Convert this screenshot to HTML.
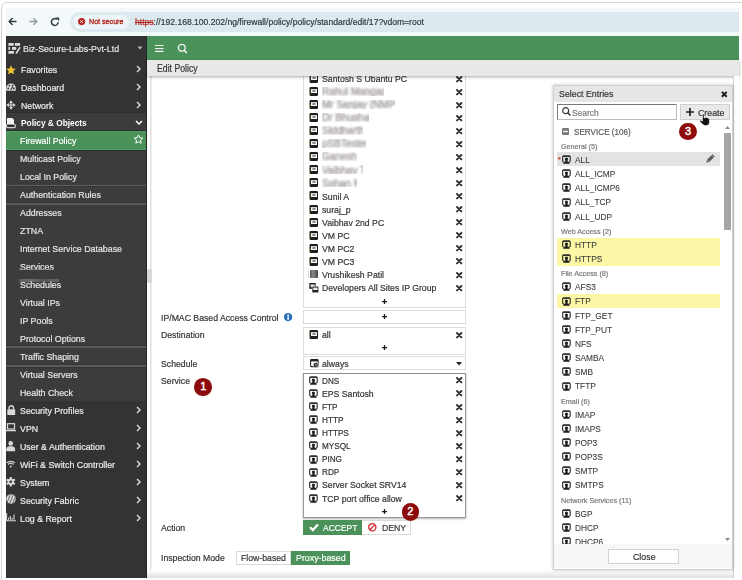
<!DOCTYPE html>
<html><head><meta charset="utf-8"><style>
html,body{margin:0;padding:0;width:742px;height:580px;overflow:hidden;background:#fff;}
body{position:relative;font-family:"Liberation Sans",sans-serif;}
.t{position:absolute;white-space:nowrap;line-height:1;transform-origin:0 0;-webkit-text-stroke:0.2px currentColor;}
.r{position:absolute;}
svg.r{overflow:visible;}
</style></head><body>
<div class="r" style="left:1px;top:2px;width:760px;height:600px;border:1.5px solid #d6d6d6;border-radius:6px;box-sizing:border-box;"></div>
<div class="r" style="left:6px;top:8px;width:733px;height:28px;background:#f3f8fa;"></div>
<div class="r" style="left:70px;top:12px;width:669px;height:19.5px;background:#dce9ee;border-radius:10px 0 0 10px;"></div>
<div class="r" style="left:73px;top:15px;width:56px;height:13.5px;background:#eef5f8;border-radius:7px;"></div>
<svg class="r" style="left:8px;top:17px;" width="9" height="9" viewBox="0 0 9 9"><path d="M8.5 4.5H1.2M4.6 1.1L1.2 4.5l3.4 3.4" fill="none" stroke="#2e3c42" stroke-width="1.4"/></svg>
<svg class="r" style="left:29px;top:17px;" width="9" height="9" viewBox="0 0 9 9"><path d="M0.5 4.5h7.3M4.4 1.1l3.4 3.4-3.4 3.4" fill="none" stroke="#8b989d" stroke-width="1.3"/></svg>
<svg class="r" style="left:50px;top:17px;" width="10" height="10" viewBox="0 0 10 10"><path d="M8.2 5.2A3.4 3.4 0 1 1 6.9 2.3" fill="none" stroke="#2e3c42" stroke-width="1.5"/><path d="M5.6 0.6h3.6v3.6z" fill="#2e3c42"/></svg>
<svg class="r" style="left:78px;top:18.1px;" width="7.2" height="7.2" viewBox="0 0 7.2 7.2"><circle cx="3.6" cy="3.6" r="3.6" fill="#b3261e"/><path d="M2.3 2.3l2.6 2.6M4.9 2.3L2.3 4.9" stroke="#fff" stroke-width="0.9"/></svg>
<div class="t" style="left:88.80px;top:18.00px;font-size:8px;transform:scaleX(0.89);color:#b3261e;font-weight:400;-webkit-text-stroke:0.35px #b3261e;">Not secure</div>
<div class="t" style="left:134.50px;top:18.00px;font-size:9px;transform:scaleX(0.952);color:#333a3d;font-weight:400;"><span style="color:#b3261e;text-decoration:line-through">https</span>://192.168.100.202/ng/firewall/policy/policy/standard/edit/17?vdom=root</div>
<div class="r" style="left:6px;top:36px;width:141px;height:542px;background:#333;"></div>
<div class="r" style="left:6px;top:112px;width:141px;height:18px;background:#3c3c3c;border-top:1px solid #2e2e2e;box-sizing:border-box;"></div>
<div class="r" style="left:6px;top:130px;width:141px;height:1px;background:#2e2b2e;"></div>
<div class="r" style="left:6px;top:131px;width:141px;height:19px;background:#4a925a;border-top:1px solid #50a062;border-bottom:1px solid #50a062;box-sizing:border-box;"></div>
<div class="r" style="left:6px;top:150px;width:141px;height:1px;background:#2e2b2e;"></div>
<div class="r" style="left:6px;top:151px;width:141px;height:250px;background:#3c3c3c;"></div>
<div class="r" style="left:6px;top:185px;width:141px;height:1px;background:#5e5e5e;"></div>
<div class="r" style="left:6px;top:186px;width:141px;height:1px;background:#353535;"></div>
<div class="r" style="left:6px;top:202px;width:141px;height:1px;background:#353535;"></div>
<div class="r" style="left:6px;top:203px;width:141px;height:2px;background:#585858;"></div>
<div class="r" style="left:6px;top:345px;width:141px;height:1px;background:#333;"></div>
<div class="r" style="left:6px;top:346px;width:141px;height:2px;background:#5a5a5a;"></div>
<div class="r" style="left:6px;top:364px;width:141px;height:1px;background:#353535;"></div>
<div class="r" style="left:6px;top:365px;width:141px;height:2px;background:#5a5a5a;"></div>
<div class="r" style="left:6px;top:367px;width:141px;height:1px;background:#353535;"></div>
<svg class="r" style="left:8px;top:43px;" width="13" height="11" viewBox="0 0 13 11"><g fill="#dcdcdc"><rect x="0.4" y="0" width="5.3" height="2.8"/><rect x="6.9" y="0" width="5.2" height="2.8"/><rect x="0.4" y="4" width="1.7" height="2.8"/><rect x="4" y="4" width="4.2" height="2.8"/><rect x="0.4" y="8" width="5.6" height="2.7"/></g><path d="M8 10.6L12 4.3" stroke="#dcdcdc" stroke-width="1.7"/><circle cx="12.2" cy="10.2" r="0.6" fill="#777"/></svg>
<div class="t" style="left:23.40px;top:44.00px;font-size:9.8px;transform:scaleX(0.9);color:#e6e6e6;font-weight:400;">Biz-Secure-Labs-Pvt-Ltd</div>
<svg class="r" style="left:137.3px;top:46.3px;" width="6" height="4" viewBox="0 0 6 4"><path d="M0.5 0.5h5L3 3.5z" fill="#bbb"/></svg>
<svg class="r" style="left:6px;top:64.5px;" width="10" height="10" viewBox="0 0 10 10"><path d="M5 0.3l1.45 3.1 3.35.35-2.5 2.3.7 3.3L5 7.7 2 9.35l.7-3.3L.2 3.75l3.35-.35z" fill="#f2c230"/></svg>
<div class="t" style="left:20.70px;top:65.00px;font-size:9.8px;transform:scaleX(0.9);color:#ececec;font-weight:400;">Favorites</div>
<svg class="r" style="left:136.3px;top:64.6px;" width="5" height="8" viewBox="0 0 5 8"><path d="M1 1l3 3-3 3" fill="none" stroke="#ddd" stroke-width="1.4"/></svg>
<div class="t" style="left:20.70px;top:83.00px;font-size:9.8px;transform:scaleX(0.9);color:#ececec;font-weight:400;">Dashboard</div>
<svg class="r" style="left:136.3px;top:82.6px;" width="5" height="8" viewBox="0 0 5 8"><path d="M1 1l3 3-3 3" fill="none" stroke="#ddd" stroke-width="1.4"/></svg>
<div class="t" style="left:20.70px;top:101.00px;font-size:9.8px;transform:scaleX(0.9);color:#ececec;font-weight:400;">Network</div>
<svg class="r" style="left:136.3px;top:100.5px;" width="5" height="8" viewBox="0 0 5 8"><path d="M1 1l3 3-3 3" fill="none" stroke="#ddd" stroke-width="1.4"/></svg>
<div class="t" style="left:20.70px;top:118.00px;font-size:9.8px;transform:scaleX(0.85);color:#fff;font-weight:700;-webkit-text-stroke:0;">Policy &amp; Objects</div>
<svg class="r" style="left:135px;top:120px;" width="8" height="5" viewBox="0 0 8 5"><path d="M1 1l3 3 3-3" fill="none" stroke="#fff" stroke-width="1.5"/></svg>
<div class="t" style="left:20.40px;top:136.00px;font-size:9.8px;transform:scaleX(0.9);color:#fff;font-weight:400;">Firewall Policy</div>
<svg class="r" style="left:133px;top:134px;" width="11" height="11" viewBox="0 0 11 11"><path d="M5.5 1l1.3 2.8 3 .3-2.3 2.1.65 3L5.5 7.7 2.85 9.2l.65-3L1.2 4.1l3-.3z" fill="none" stroke="#fff" stroke-width="1"/></svg>
<div class="t" style="left:20.40px;top:154.00px;font-size:9.8px;transform:scaleX(0.9);color:#e6e6e6;font-weight:400;">Multicast Policy</div>
<div class="t" style="left:20.40px;top:172.00px;font-size:9.8px;transform:scaleX(0.9);color:#e6e6e6;font-weight:400;">Local In Policy</div>
<div class="t" style="left:20.40px;top:190.00px;font-size:9.8px;transform:scaleX(0.9);color:#e6e6e6;font-weight:400;">Authentication Rules</div>
<div class="t" style="left:20.40px;top:208.00px;font-size:9.8px;transform:scaleX(0.9);color:#e6e6e6;font-weight:400;">Addresses</div>
<div class="t" style="left:20.40px;top:226.00px;font-size:9.8px;transform:scaleX(0.9);color:#e6e6e6;font-weight:400;">ZTNA</div>
<div class="t" style="left:20.40px;top:244.00px;font-size:9.8px;transform:scaleX(0.9);color:#e6e6e6;font-weight:400;">Internet Service Database</div>
<div class="t" style="left:20.40px;top:262.00px;font-size:9.8px;transform:scaleX(0.9);color:#e6e6e6;font-weight:400;">Services</div>
<div class="t" style="left:20.40px;top:280.00px;font-size:9.8px;transform:scaleX(0.9);color:#e6e6e6;font-weight:400;">Schedules</div>
<div class="t" style="left:20.40px;top:298.00px;font-size:9.8px;transform:scaleX(0.9);color:#e6e6e6;font-weight:400;">Virtual IPs</div>
<div class="t" style="left:20.40px;top:316.00px;font-size:9.8px;transform:scaleX(0.9);color:#e6e6e6;font-weight:400;">IP Pools</div>
<div class="t" style="left:20.40px;top:334.00px;font-size:9.8px;transform:scaleX(0.9);color:#e6e6e6;font-weight:400;">Protocol Options</div>
<div class="t" style="left:20.40px;top:352.00px;font-size:9.8px;transform:scaleX(0.9);color:#e6e6e6;font-weight:400;">Traffic Shaping</div>
<div class="t" style="left:20.40px;top:370.00px;font-size:9.8px;transform:scaleX(0.9);color:#e6e6e6;font-weight:400;">Virtual Servers</div>
<div class="t" style="left:20.40px;top:388.00px;font-size:9.8px;transform:scaleX(0.9);color:#e6e6e6;font-weight:400;">Health Check</div>
<div class="r" style="left:19px;top:269px;width:34px;height:1px;background:#8a8a8a;opacity:0.7;"></div>
<div class="r" style="left:19px;top:279px;width:40px;height:2.5px;background:linear-gradient(90deg,#777,#999 30%,#6a6a6a 60%,#888);opacity:0.55;filter:blur(0.4px);"></div>
<div class="t" style="left:20.40px;top:406.00px;font-size:9.8px;transform:scaleX(0.9);color:#ececec;font-weight:400;">Security Profiles</div>
<svg class="r" style="left:136.3px;top:405.5px;" width="5" height="8" viewBox="0 0 5 8"><path d="M1 1l3 3-3 3" fill="none" stroke="#ddd" stroke-width="1.4"/></svg>
<div class="t" style="left:20.40px;top:424.00px;font-size:9.8px;transform:scaleX(0.9);color:#ececec;font-weight:400;">VPN</div>
<svg class="r" style="left:136.3px;top:423.5px;" width="5" height="8" viewBox="0 0 5 8"><path d="M1 1l3 3-3 3" fill="none" stroke="#ddd" stroke-width="1.4"/></svg>
<div class="t" style="left:20.40px;top:442.00px;font-size:9.8px;transform:scaleX(0.9);color:#ececec;font-weight:400;">User &amp; Authentication</div>
<svg class="r" style="left:136.3px;top:441.5px;" width="5" height="8" viewBox="0 0 5 8"><path d="M1 1l3 3-3 3" fill="none" stroke="#ddd" stroke-width="1.4"/></svg>
<div class="t" style="left:20.40px;top:460.00px;font-size:9.8px;transform:scaleX(0.9);color:#ececec;font-weight:400;">WiFi &amp; Switch Controller</div>
<svg class="r" style="left:136.3px;top:459.5px;" width="5" height="8" viewBox="0 0 5 8"><path d="M1 1l3 3-3 3" fill="none" stroke="#ddd" stroke-width="1.4"/></svg>
<div class="t" style="left:20.40px;top:478.00px;font-size:9.8px;transform:scaleX(0.9);color:#ececec;font-weight:400;">System</div>
<svg class="r" style="left:136.3px;top:477.5px;" width="5" height="8" viewBox="0 0 5 8"><path d="M1 1l3 3-3 3" fill="none" stroke="#ddd" stroke-width="1.4"/></svg>
<div class="t" style="left:20.40px;top:496.00px;font-size:9.8px;transform:scaleX(0.9);color:#ececec;font-weight:400;">Security Fabric</div>
<svg class="r" style="left:136.3px;top:495.5px;" width="5" height="8" viewBox="0 0 5 8"><path d="M1 1l3 3-3 3" fill="none" stroke="#ddd" stroke-width="1.4"/></svg>
<div class="t" style="left:20.40px;top:514.00px;font-size:9.8px;transform:scaleX(0.9);color:#ececec;font-weight:400;">Log &amp; Report</div>
<svg class="r" style="left:136.3px;top:513.5px;" width="5" height="8" viewBox="0 0 5 8"><path d="M1 1l3 3-3 3" fill="none" stroke="#ddd" stroke-width="1.4"/></svg>
<svg class="r" style="left:6px;top:83px;" width="10" height="8" viewBox="0 0 10 8"><path d="M0.2 7.8V5.2A4.8 4.8 0 0 1 9.8 5.2V7.8z" fill="#d9d9d9"/><circle cx="2.2" cy="5.4" r="0.9" fill="#333"/><circle cx="3.4" cy="2.6" r="0.9" fill="#333"/><circle cx="6.6" cy="2.6" r="0.9" fill="#333"/><path d="M4.6 7L6.9 3.6" stroke="#333" stroke-width="1.1"/><circle cx="7.9" cy="5.4" r="0.9" fill="#333"/></svg>
<svg class="r" style="left:5.9px;top:99.8px;" width="10" height="10" viewBox="0 0 10 10"><path d="M5 0.3L6.9 2.9H5.6V4.4H7.1V3.1L9.7 5L7.1 6.9V5.6H5.6V7.1H6.9L5 9.7L3.1 7.1H4.4V5.6H2.9V6.9L0.3 5L2.9 3.1V4.4H4.4V2.9H3.1Z" fill="#d9d9d9"/></svg>
<svg class="r" style="left:5px;top:116px;" width="12" height="13" viewBox="0 0 12 13"><path d="M2 1.9H7.2L9 3.8V8.4H2Z" fill="#f2f2f2"/><path d="M1.6 8.3V10.6Q1.6 11.6 2.6 11.6H9.4Q10.4 11.6 10.4 10.6V9.3Q10.4 8.3 9.4 8.3H7.8" fill="none" stroke="#d0d0d0" stroke-width="1.1"/><path d="M2.8 9.6H8.6" stroke="#262626" stroke-width="1.1"/></svg>
<svg class="r" style="left:6.5px;top:405px;" width="8.5" height="10" viewBox="0 0 8.5 10"><path d="M2 4.3V3a2.25 2.25 0 0 1 4.5 0v1.3" fill="none" stroke="#d9d9d9" stroke-width="1.4"/><rect x="0.3" y="4.3" width="7.9" height="5.7" rx="0.6" fill="#d9d9d9"/></svg>
<svg class="r" style="left:6px;top:423px;" width="10" height="9" viewBox="0 0 10 9"><rect x="1.5" y="0.7" width="7" height="5.3" fill="none" stroke="#d9d9d9" stroke-width="1.2"/><path d="M0 7.6h10" stroke="#d9d9d9" stroke-width="1.3"/></svg>
<svg class="r" style="left:6.3px;top:440.6px;" width="9.4" height="10.3" viewBox="0 0 9.4 10.3"><circle cx="4.7" cy="2.4" r="2.3" fill="#d9d9d9"/><path d="M0.3 10.2V8.3c0-1.8 1.4-3 3.2-3h2.4c1.8 0 3.2 1.2 3.2 3v1.9z" fill="#d9d9d9"/></svg>
<svg class="r" style="left:6.3px;top:459.6px;" width="9.5" height="7.6" viewBox="0 0 9.5 7.6"><path d="M0.6 2.9a6 6 0 0 1 8.3 0M2.1 4.5a3.8 3.8 0 0 1 5.3 0" fill="none" stroke="#d9d9d9" stroke-width="1.2"/><circle cx="4.75" cy="6.5" r="1" fill="#d9d9d9"/></svg>
<svg class="r" style="left:6px;top:476.5px;" width="9.5" height="9.5" viewBox="0 0 9.5 9.5"><g transform="translate(4.75 4.75)"><circle r="3.2" fill="#d9d9d9"/><rect x="-1" y="-4.75" width="2" height="2.4" fill="#d9d9d9" transform="rotate(0)"/><rect x="-1" y="-4.75" width="2" height="2.4" fill="#d9d9d9" transform="rotate(60)"/><rect x="-1" y="-4.75" width="2" height="2.4" fill="#d9d9d9" transform="rotate(120)"/><rect x="-1" y="-4.75" width="2" height="2.4" fill="#d9d9d9" transform="rotate(180)"/><rect x="-1" y="-4.75" width="2" height="2.4" fill="#d9d9d9" transform="rotate(240)"/><rect x="-1" y="-4.75" width="2" height="2.4" fill="#d9d9d9" transform="rotate(300)"/><circle r="1.3" fill="#333"/></g></svg>
<svg class="r" style="left:6px;top:494px;" width="10" height="10" viewBox="0 0 10 10"><clipPath id="sfc"><circle cx="5" cy="5" r="4.8"/></clipPath><g clip-path="url(#sfc)"><rect width="10" height="10" fill="#d9d9d9"/><path d="M3 11L8 -1M6 11L11 -1M0 11L5 -1" stroke="#555" stroke-width="0.9"/></g></svg>
<svg class="r" style="left:6px;top:512.5px;" width="10" height="8.5" viewBox="0 0 10 8.5"><path d="M0.6 0v7.8h9.4" fill="none" stroke="#d9d9d9" stroke-width="1.1"/><path d="M2.6 6.8V4.5M4.4 6.8V3M6.2 6.8V5M8 6.8V1.5" stroke="#d9d9d9" stroke-width="1.1"/></svg>
<div class="r" style="left:147px;top:36px;width:592px;height:24px;background:#4a925a;"></div>
<svg class="r" style="left:155px;top:44px;" width="8.5" height="8.5" viewBox="0 0 8.5 8.5"><path d="M0 1.5h8.5M0 4.5h8.5M0 7.4h8.5" stroke="#f4f4f4" stroke-width="1.15"/></svg>
<svg class="r" style="left:177px;top:42.5px;" width="11" height="11" viewBox="0 0 11 11"><circle cx="4.8" cy="4.8" r="3.4" fill="none" stroke="#f4f4f4" stroke-width="1.3"/><path d="M7.2 7.3l2.6 2.8" stroke="#f4f4f4" stroke-width="1.5"/></svg>
<div class="r" style="left:147px;top:60px;width:592px;height:16px;background:#e8e8e8;box-shadow:0 1px 3px rgba(0,0,0,0.35);z-index:5;"></div>
<div class="t" style="left:156.70px;top:64.00px;font-size:10px;transform:scaleX(0.87);color:#333;font-weight:400;z-index:6;">Edit Policy</div>
<div class="r" style="left:147px;top:76px;width:592px;height:502px;background:#fff;z-index:0;"></div>
<div class="r" style="left:150px;top:76px;width:1px;height:502px;background:#dedede;"></div>
<div class="r" style="left:151px;top:76px;width:1px;height:502px;background:#f1f1f1;"></div>
<div class="r" style="left:146px;top:36px;width:1px;height:542px;background:#262626;z-index:3;"></div>
<div class="r" style="left:147px;top:269px;width:5px;height:14px;background:#d8d8d8;border-radius:2px;"></div>
<div class="r" style="left:303px;top:66px;width:163px;height:242px;border:1px solid #dcdcdc;box-sizing:border-box;background:#fff;"></div>
<svg class="r" style="left:308.7px;top:73.8px;" width="9" height="9" viewBox="0 0 9 9"><rect x="0.5" y="0" width="8.5" height="9" rx="1.2" fill="#1e1e1e"/><rect x="2" y="2.2" width="6" height="3.8" fill="#fff"/><rect x="3.2" y="3.1" width="3.6" height="2" rx="0.8" fill="#8a8a8a"/><path d="M0 2.2h1.4M0 4.5h1.4M0 6.8h1.4" stroke="#c9a96a" stroke-width="0.8"/></svg>
<div class="t" style="left:321.80px;top:74.00px;font-size:9.5px;transform:scaleX(0.915);color:#333;font-weight:400;">Santosh S Ubantu PC</div>
<svg class="r" style="left:455.8px;top:75.5px;" width="6.4" height="6.4" viewBox="0 0 6.4 6.4"><path d="M1 1l4.4 4.4M5.4 1L1 5.4" stroke="#303030" stroke-width="1.9" stroke-linecap="round"/></svg>
<svg class="r" style="left:308.7px;top:86.86999999999999px;" width="9" height="9" viewBox="0 0 9 9"><rect x="0.5" y="0" width="8.5" height="9" rx="1.2" fill="#1e1e1e"/><rect x="2" y="2.2" width="6" height="3.8" fill="#fff"/><rect x="3.2" y="3.1" width="3.6" height="2" rx="0.8" fill="#8a8a8a"/><path d="M0 2.2h1.4M0 4.5h1.4M0 6.8h1.4" stroke="#c9a96a" stroke-width="0.8"/></svg>
<div class="r" style="left:322px;top:86.9px;width:62px;height:9px;overflow:hidden;"><div class="t" style="left:0;top:0.3px;font-size:10px;color:#9a98a8;filter:blur(0.9px);opacity:0.9;-webkit-text-stroke:0.6px #a8a0a0;">Rahul Mangade</div></div>
<svg class="r" style="left:455.8px;top:88.57px;" width="6.4" height="6.4" viewBox="0 0 6.4 6.4"><path d="M1 1l4.4 4.4M5.4 1L1 5.4" stroke="#303030" stroke-width="1.9" stroke-linecap="round"/></svg>
<svg class="r" style="left:308.7px;top:99.94px;" width="9" height="9" viewBox="0 0 9 9"><rect x="0.5" y="0" width="8.5" height="9" rx="1.2" fill="#1e1e1e"/><rect x="2" y="2.2" width="6" height="3.8" fill="#fff"/><rect x="3.2" y="3.1" width="3.6" height="2" rx="0.8" fill="#8a8a8a"/><path d="M0 2.2h1.4M0 4.5h1.4M0 6.8h1.4" stroke="#c9a96a" stroke-width="0.8"/></svg>
<div class="r" style="left:322px;top:99.9px;width:73px;height:9px;overflow:hidden;"><div class="t" style="left:0;top:0.3px;font-size:10px;color:#9a98a8;filter:blur(0.9px);opacity:0.9;-webkit-text-stroke:0.6px #a8a0a0;">Mr Sanjay (NMPC)</div></div>
<svg class="r" style="left:455.8px;top:101.64px;" width="6.4" height="6.4" viewBox="0 0 6.4 6.4"><path d="M1 1l4.4 4.4M5.4 1L1 5.4" stroke="#303030" stroke-width="1.9" stroke-linecap="round"/></svg>
<svg class="r" style="left:308.7px;top:113.01px;" width="9" height="9" viewBox="0 0 9 9"><rect x="0.5" y="0" width="8.5" height="9" rx="1.2" fill="#1e1e1e"/><rect x="2" y="2.2" width="6" height="3.8" fill="#fff"/><rect x="3.2" y="3.1" width="3.6" height="2" rx="0.8" fill="#8a8a8a"/><path d="M0 2.2h1.4M0 4.5h1.4M0 6.8h1.4" stroke="#c9a96a" stroke-width="0.8"/></svg>
<div class="r" style="left:322px;top:113.0px;width:47px;height:9px;overflow:hidden;"><div class="t" style="left:0;top:0.3px;font-size:10px;color:#9a98a8;filter:blur(0.9px);opacity:0.9;-webkit-text-stroke:0.6px #a8a0a0;">Dr Bhushan</div></div>
<svg class="r" style="left:455.8px;top:114.71000000000001px;" width="6.4" height="6.4" viewBox="0 0 6.4 6.4"><path d="M1 1l4.4 4.4M5.4 1L1 5.4" stroke="#303030" stroke-width="1.9" stroke-linecap="round"/></svg>
<svg class="r" style="left:308.7px;top:126.08px;" width="9" height="9" viewBox="0 0 9 9"><rect x="0.5" y="0" width="8.5" height="9" rx="1.2" fill="#1e1e1e"/><rect x="2" y="2.2" width="6" height="3.8" fill="#fff"/><rect x="3.2" y="3.1" width="3.6" height="2" rx="0.8" fill="#8a8a8a"/><path d="M0 2.2h1.4M0 4.5h1.4M0 6.8h1.4" stroke="#c9a96a" stroke-width="0.8"/></svg>
<div class="r" style="left:322px;top:126.1px;width:41px;height:9px;overflow:hidden;"><div class="t" style="left:0;top:0.3px;font-size:10px;color:#9a98a8;filter:blur(0.9px);opacity:0.9;-webkit-text-stroke:0.6px #a8a0a0;">Siddharth</div></div>
<svg class="r" style="left:455.8px;top:127.77999999999999px;" width="6.4" height="6.4" viewBox="0 0 6.4 6.4"><path d="M1 1l4.4 4.4M5.4 1L1 5.4" stroke="#303030" stroke-width="1.9" stroke-linecap="round"/></svg>
<svg class="r" style="left:308.7px;top:139.15px;" width="9" height="9" viewBox="0 0 9 9"><rect x="0.5" y="0" width="8.5" height="9" rx="1.2" fill="#1e1e1e"/><rect x="2" y="2.2" width="6" height="3.8" fill="#fff"/><rect x="3.2" y="3.1" width="3.6" height="2" rx="0.8" fill="#8a8a8a"/><path d="M0 2.2h1.4M0 4.5h1.4M0 6.8h1.4" stroke="#c9a96a" stroke-width="0.8"/></svg>
<div class="r" style="left:322px;top:139.2px;width:44px;height:9px;overflow:hidden;"><div class="t" style="left:0;top:0.3px;font-size:10px;color:#9a98a8;filter:blur(0.9px);opacity:0.9;-webkit-text-stroke:0.6px #a8a0a0;">pSBTester</div></div>
<svg class="r" style="left:455.8px;top:140.85px;" width="6.4" height="6.4" viewBox="0 0 6.4 6.4"><path d="M1 1l4.4 4.4M5.4 1L1 5.4" stroke="#303030" stroke-width="1.9" stroke-linecap="round"/></svg>
<svg class="r" style="left:308.7px;top:152.22000000000003px;" width="9" height="9" viewBox="0 0 9 9"><rect x="0.5" y="0" width="8.5" height="9" rx="1.2" fill="#1e1e1e"/><rect x="2" y="2.2" width="6" height="3.8" fill="#fff"/><rect x="3.2" y="3.1" width="3.6" height="2" rx="0.8" fill="#8a8a8a"/><path d="M0 2.2h1.4M0 4.5h1.4M0 6.8h1.4" stroke="#c9a96a" stroke-width="0.8"/></svg>
<div class="r" style="left:322px;top:152.2px;width:35px;height:9px;overflow:hidden;"><div class="t" style="left:0;top:0.3px;font-size:10px;color:#9a98a8;filter:blur(0.9px);opacity:0.9;-webkit-text-stroke:0.6px #a8a0a0;">Ganesh</div></div>
<svg class="r" style="left:455.8px;top:153.92000000000002px;" width="6.4" height="6.4" viewBox="0 0 6.4 6.4"><path d="M1 1l4.4 4.4M5.4 1L1 5.4" stroke="#303030" stroke-width="1.9" stroke-linecap="round"/></svg>
<svg class="r" style="left:308.7px;top:165.29000000000002px;" width="9" height="9" viewBox="0 0 9 9"><rect x="0.5" y="0" width="8.5" height="9" rx="1.2" fill="#1e1e1e"/><rect x="2" y="2.2" width="6" height="3.8" fill="#fff"/><rect x="3.2" y="3.1" width="3.6" height="2" rx="0.8" fill="#8a8a8a"/><path d="M0 2.2h1.4M0 4.5h1.4M0 6.8h1.4" stroke="#c9a96a" stroke-width="0.8"/></svg>
<div class="r" style="left:322px;top:165.3px;width:41px;height:9px;overflow:hidden;"><div class="t" style="left:0;top:0.3px;font-size:10px;color:#9a98a8;filter:blur(0.9px);opacity:0.9;-webkit-text-stroke:0.6px #a8a0a0;">Vaibhav T</div></div>
<svg class="r" style="left:455.8px;top:166.99px;" width="6.4" height="6.4" viewBox="0 0 6.4 6.4"><path d="M1 1l4.4 4.4M5.4 1L1 5.4" stroke="#303030" stroke-width="1.9" stroke-linecap="round"/></svg>
<svg class="r" style="left:308.7px;top:178.36px;" width="9" height="9" viewBox="0 0 9 9"><rect x="0.5" y="0" width="8.5" height="9" rx="1.2" fill="#1e1e1e"/><rect x="2" y="2.2" width="6" height="3.8" fill="#fff"/><rect x="3.2" y="3.1" width="3.6" height="2" rx="0.8" fill="#8a8a8a"/><path d="M0 2.2h1.4M0 4.5h1.4M0 6.8h1.4" stroke="#c9a96a" stroke-width="0.8"/></svg>
<div class="r" style="left:322px;top:178.4px;width:35px;height:9px;overflow:hidden;"><div class="t" style="left:0;top:0.3px;font-size:10px;color:#9a98a8;filter:blur(0.9px);opacity:0.9;-webkit-text-stroke:0.6px #a8a0a0;">Sohan K</div></div>
<svg class="r" style="left:455.8px;top:180.06px;" width="6.4" height="6.4" viewBox="0 0 6.4 6.4"><path d="M1 1l4.4 4.4M5.4 1L1 5.4" stroke="#303030" stroke-width="1.9" stroke-linecap="round"/></svg>
<svg class="r" style="left:308.7px;top:191.43px;" width="9" height="9" viewBox="0 0 9 9"><rect x="0.5" y="0" width="8.5" height="9" rx="1.2" fill="#1e1e1e"/><rect x="2" y="2.2" width="6" height="3.8" fill="#fff"/><rect x="3.2" y="3.1" width="3.6" height="2" rx="0.8" fill="#8a8a8a"/><path d="M0 2.2h1.4M0 4.5h1.4M0 6.8h1.4" stroke="#c9a96a" stroke-width="0.8"/></svg>
<div class="t" style="left:321.80px;top:192.00px;font-size:9.5px;transform:scaleX(0.915);color:#333;font-weight:400;">Sunil A</div>
<svg class="r" style="left:455.8px;top:193.13px;" width="6.4" height="6.4" viewBox="0 0 6.4 6.4"><path d="M1 1l4.4 4.4M5.4 1L1 5.4" stroke="#303030" stroke-width="1.9" stroke-linecap="round"/></svg>
<svg class="r" style="left:308.7px;top:204.5px;" width="9" height="9" viewBox="0 0 9 9"><rect x="0.5" y="0" width="8.5" height="9" rx="1.2" fill="#1e1e1e"/><rect x="2" y="2.2" width="6" height="3.8" fill="#fff"/><rect x="3.2" y="3.1" width="3.6" height="2" rx="0.8" fill="#8a8a8a"/><path d="M0 2.2h1.4M0 4.5h1.4M0 6.8h1.4" stroke="#c9a96a" stroke-width="0.8"/></svg>
<div class="t" style="left:321.80px;top:205.00px;font-size:9.5px;transform:scaleX(0.915);color:#333;font-weight:400;">suraj_p</div>
<svg class="r" style="left:455.8px;top:206.2px;" width="6.4" height="6.4" viewBox="0 0 6.4 6.4"><path d="M1 1l4.4 4.4M5.4 1L1 5.4" stroke="#303030" stroke-width="1.9" stroke-linecap="round"/></svg>
<svg class="r" style="left:308.7px;top:217.57000000000002px;" width="9" height="9" viewBox="0 0 9 9"><rect x="0.5" y="0" width="8.5" height="9" rx="1.2" fill="#1e1e1e"/><rect x="2" y="2.2" width="6" height="3.8" fill="#fff"/><rect x="3.2" y="3.1" width="3.6" height="2" rx="0.8" fill="#8a8a8a"/><path d="M0 2.2h1.4M0 4.5h1.4M0 6.8h1.4" stroke="#c9a96a" stroke-width="0.8"/></svg>
<div class="t" style="left:321.80px;top:218.00px;font-size:9.5px;transform:scaleX(0.915);color:#333;font-weight:400;">Vaibhav 2nd PC</div>
<svg class="r" style="left:455.8px;top:219.27px;" width="6.4" height="6.4" viewBox="0 0 6.4 6.4"><path d="M1 1l4.4 4.4M5.4 1L1 5.4" stroke="#303030" stroke-width="1.9" stroke-linecap="round"/></svg>
<svg class="r" style="left:308.7px;top:230.64000000000001px;" width="9" height="9" viewBox="0 0 9 9"><rect x="0.5" y="0" width="8.5" height="9" rx="1.2" fill="#1e1e1e"/><rect x="2" y="2.2" width="6" height="3.8" fill="#fff"/><rect x="3.2" y="3.1" width="3.6" height="2" rx="0.8" fill="#8a8a8a"/><path d="M0 2.2h1.4M0 4.5h1.4M0 6.8h1.4" stroke="#c9a96a" stroke-width="0.8"/></svg>
<div class="t" style="left:321.80px;top:231.00px;font-size:9.5px;transform:scaleX(0.915);color:#333;font-weight:400;">VM PC</div>
<svg class="r" style="left:455.8px;top:232.34px;" width="6.4" height="6.4" viewBox="0 0 6.4 6.4"><path d="M1 1l4.4 4.4M5.4 1L1 5.4" stroke="#303030" stroke-width="1.9" stroke-linecap="round"/></svg>
<svg class="r" style="left:308.7px;top:243.71px;" width="9" height="9" viewBox="0 0 9 9"><rect x="0.5" y="0" width="8.5" height="9" rx="1.2" fill="#1e1e1e"/><rect x="2" y="2.2" width="6" height="3.8" fill="#fff"/><rect x="3.2" y="3.1" width="3.6" height="2" rx="0.8" fill="#8a8a8a"/><path d="M0 2.2h1.4M0 4.5h1.4M0 6.8h1.4" stroke="#c9a96a" stroke-width="0.8"/></svg>
<div class="t" style="left:321.80px;top:244.00px;font-size:9.5px;transform:scaleX(0.915);color:#333;font-weight:400;">VM PC2</div>
<svg class="r" style="left:455.8px;top:245.41px;" width="6.4" height="6.4" viewBox="0 0 6.4 6.4"><path d="M1 1l4.4 4.4M5.4 1L1 5.4" stroke="#303030" stroke-width="1.9" stroke-linecap="round"/></svg>
<svg class="r" style="left:308.7px;top:256.78000000000003px;" width="9" height="9" viewBox="0 0 9 9"><rect x="0.5" y="0" width="8.5" height="9" rx="1.2" fill="#1e1e1e"/><rect x="2" y="2.2" width="6" height="3.8" fill="#fff"/><rect x="3.2" y="3.1" width="3.6" height="2" rx="0.8" fill="#8a8a8a"/><path d="M0 2.2h1.4M0 4.5h1.4M0 6.8h1.4" stroke="#c9a96a" stroke-width="0.8"/></svg>
<div class="t" style="left:321.80px;top:257.00px;font-size:9.5px;transform:scaleX(0.915);color:#333;font-weight:400;">VM PC3</div>
<svg class="r" style="left:455.8px;top:258.48px;" width="6.4" height="6.4" viewBox="0 0 6.4 6.4"><path d="M1 1l4.4 4.4M5.4 1L1 5.4" stroke="#303030" stroke-width="1.9" stroke-linecap="round"/></svg>
<div class="r" style="left:310px;top:269.65000000000003px;width:8px;height:8.7px;background:linear-gradient(90deg,#555,#8a8a8a 40%,#666 70%,#444);border-radius:1px;"></div>
<div class="r" style="left:308px;top:270.05px;width:1px;height:8px;background:#ddd;"></div>
<div class="t" style="left:321.80px;top:270.00px;font-size:9.5px;transform:scaleX(0.915);color:#333;font-weight:400;">Vrushikesh Patil</div>
<svg class="r" style="left:455.8px;top:271.55px;" width="6.4" height="6.4" viewBox="0 0 6.4 6.4"><path d="M1 1l4.4 4.4M5.4 1L1 5.4" stroke="#303030" stroke-width="1.9" stroke-linecap="round"/></svg>
<svg class="r" style="left:309.3px;top:282.52px;" width="10" height="10" viewBox="0 0 10 10"><rect x="0.3" y="0" width="6.5" height="6" rx="0.8" fill="#222"/><rect x="1.5" y="1.5" width="4.2" height="2.2" fill="#eee"/><rect x="3" y="3.2" width="6.7" height="6.6" rx="0.8" fill="#222" stroke="#fff" stroke-width="0.6"/><rect x="4.2" y="4.6" width="4.3" height="2.4" fill="#eee"/></svg>
<div class="t" style="left:321.80px;top:283.00px;font-size:9.5px;transform:scaleX(0.915);color:#333;font-weight:400;">Developers All Sites IP Group</div>
<svg class="r" style="left:455.8px;top:284.62px;" width="6.4" height="6.4" viewBox="0 0 6.4 6.4"><path d="M1 1l4.4 4.4M5.4 1L1 5.4" stroke="#303030" stroke-width="1.9" stroke-linecap="round"/></svg>
<svg class="r" style="left:381.8px;top:298.5px;" width="5" height="5" viewBox="0 0 5 5"><path d="M2.5 0v5M0 2.5h5" stroke="#1a1a1a" stroke-width="1.25"/></svg>
<div class="r" style="left:303px;top:310px;width:163px;height:14px;border:1px solid #dcdcdc;box-sizing:border-box;"></div>
<svg class="r" style="left:381.8px;top:314.2px;" width="5" height="5" viewBox="0 0 5 5"><path d="M2.5 0v5M0 2.5h5" stroke="#1a1a1a" stroke-width="1.25"/></svg>
<div class="r" style="left:303px;top:327px;width:163px;height:28px;border:1px solid #dcdcdc;box-sizing:border-box;"></div>
<svg class="r" style="left:308.7px;top:329.6px;" width="9" height="9" viewBox="0 0 9 9"><rect x="0.5" y="0" width="8.5" height="9" rx="1.2" fill="#1e1e1e"/><rect x="2" y="2.2" width="6" height="3.8" fill="#fff"/><rect x="3.2" y="3.1" width="3.6" height="2" rx="0.8" fill="#8a8a8a"/><path d="M0 2.2h1.4M0 4.5h1.4M0 6.8h1.4" stroke="#c9a96a" stroke-width="0.8"/></svg>
<div class="t" style="left:321.80px;top:330.00px;font-size:9.5px;transform:scaleX(0.915);color:#333;font-weight:400;">all</div>
<svg class="r" style="left:455.8px;top:331.6px;" width="6.4" height="6.4" viewBox="0 0 6.4 6.4"><path d="M1 1l4.4 4.4M5.4 1L1 5.4" stroke="#303030" stroke-width="1.9" stroke-linecap="round"/></svg>
<svg class="r" style="left:381.8px;top:344.7px;" width="5" height="5" viewBox="0 0 5 5"><path d="M2.5 0v5M0 2.5h5" stroke="#1a1a1a" stroke-width="1.25"/></svg>
<div class="r" style="left:303px;top:356px;width:163px;height:14px;border:1px solid #dcdcdc;box-sizing:border-box;"></div>
<svg class="r" style="left:309.5px;top:359px;" width="9" height="9" viewBox="0 0 9 9"><rect x="0.6" y="0.6" width="7.5" height="7" rx="0.8" fill="none" stroke="#222" stroke-width="1.1"/><path d="M0.6 1.6h7.5" stroke="#222" stroke-width="1.6"/><circle cx="5.8" cy="6" r="2.6" fill="#222" stroke="#fff" stroke-width="0.6"/><path d="M5.8 4.8v1.4h1" stroke="#fff" stroke-width="0.7" fill="none"/></svg>
<div class="t" style="left:321.80px;top:359.00px;font-size:9.5px;transform:scaleX(0.915);color:#333;font-weight:400;">always</div>
<svg class="r" style="left:456px;top:362px;" width="6" height="4" viewBox="0 0 6 4"><path d="M0 0h6L3 3.5z" fill="#222"/></svg>
<div class="r" style="left:303px;top:373px;width:163px;height:145px;border:1px solid #999;border-top-color:#8a8a8a;box-sizing:border-box;box-shadow:0 1px 2px rgba(0,0,0,0.3);background:#fff;"></div>
<svg class="r" style="left:309.2px;top:376.09999999999997px;" width="9" height="9" viewBox="0 0 9 9"><path d="M2.2 6.9H1.6Q0.7 6.9 0.7 6V1.9Q0.7 1 1.6 1H7.3Q8.2 1 8.2 1.9V6Q8.2 6.9 7.3 6.9H6.7" fill="none" stroke="#1e1e1e" stroke-width="1.05"/><path d="M1.2 1.2H7.7" stroke="#1e1e1e" stroke-width="1.2"/><circle cx="4.45" cy="4.0" r="1.6" fill="#1e1e1e"/><path d="M3.5 5H5.4L5.6 6.4Q7.5 6.8 7.8 8.8H1.1Q1.4 6.8 3.3 6.4Z" fill="#1e1e1e"/></svg>
<div class="t" style="left:321.80px;top:376.00px;font-size:9.5px;transform:scaleX(0.86);color:#333;font-weight:400;">DNS</div>
<svg class="r" style="left:455.8px;top:377.4px;" width="6.4" height="6.4" viewBox="0 0 6.4 6.4"><path d="M1 1l4.4 4.4M5.4 1L1 5.4" stroke="#303030" stroke-width="1.9" stroke-linecap="round"/></svg>
<svg class="r" style="left:309.2px;top:389.16999999999996px;" width="9" height="9" viewBox="0 0 9 9"><path d="M2.2 6.9H1.6Q0.7 6.9 0.7 6V1.9Q0.7 1 1.6 1H7.3Q8.2 1 8.2 1.9V6Q8.2 6.9 7.3 6.9H6.7" fill="none" stroke="#1e1e1e" stroke-width="1.05"/><path d="M1.2 1.2H7.7" stroke="#1e1e1e" stroke-width="1.2"/><circle cx="4.45" cy="4.0" r="1.6" fill="#1e1e1e"/><path d="M3.5 5H5.4L5.6 6.4Q7.5 6.8 7.8 8.8H1.1Q1.4 6.8 3.3 6.4Z" fill="#1e1e1e"/></svg>
<div class="t" style="left:321.80px;top:389.00px;font-size:9.5px;transform:scaleX(0.915);color:#333;font-weight:400;">EPS Santosh</div>
<svg class="r" style="left:455.8px;top:390.46999999999997px;" width="6.4" height="6.4" viewBox="0 0 6.4 6.4"><path d="M1 1l4.4 4.4M5.4 1L1 5.4" stroke="#303030" stroke-width="1.9" stroke-linecap="round"/></svg>
<svg class="r" style="left:309.2px;top:402.23999999999995px;" width="9" height="9" viewBox="0 0 9 9"><path d="M2.2 6.9H1.6Q0.7 6.9 0.7 6V1.9Q0.7 1 1.6 1H7.3Q8.2 1 8.2 1.9V6Q8.2 6.9 7.3 6.9H6.7" fill="none" stroke="#1e1e1e" stroke-width="1.05"/><path d="M1.2 1.2H7.7" stroke="#1e1e1e" stroke-width="1.2"/><circle cx="4.45" cy="4.0" r="1.6" fill="#1e1e1e"/><path d="M3.5 5H5.4L5.6 6.4Q7.5 6.8 7.8 8.8H1.1Q1.4 6.8 3.3 6.4Z" fill="#1e1e1e"/></svg>
<div class="t" style="left:321.80px;top:402.00px;font-size:9.5px;transform:scaleX(0.86);color:#333;font-weight:400;">FTP</div>
<svg class="r" style="left:455.8px;top:403.53999999999996px;" width="6.4" height="6.4" viewBox="0 0 6.4 6.4"><path d="M1 1l4.4 4.4M5.4 1L1 5.4" stroke="#303030" stroke-width="1.9" stroke-linecap="round"/></svg>
<svg class="r" style="left:309.2px;top:415.30999999999995px;" width="9" height="9" viewBox="0 0 9 9"><path d="M2.2 6.9H1.6Q0.7 6.9 0.7 6V1.9Q0.7 1 1.6 1H7.3Q8.2 1 8.2 1.9V6Q8.2 6.9 7.3 6.9H6.7" fill="none" stroke="#1e1e1e" stroke-width="1.05"/><path d="M1.2 1.2H7.7" stroke="#1e1e1e" stroke-width="1.2"/><circle cx="4.45" cy="4.0" r="1.6" fill="#1e1e1e"/><path d="M3.5 5H5.4L5.6 6.4Q7.5 6.8 7.8 8.8H1.1Q1.4 6.8 3.3 6.4Z" fill="#1e1e1e"/></svg>
<div class="t" style="left:321.80px;top:415.00px;font-size:9.5px;transform:scaleX(0.86);color:#333;font-weight:400;">HTTP</div>
<svg class="r" style="left:455.8px;top:416.60999999999996px;" width="6.4" height="6.4" viewBox="0 0 6.4 6.4"><path d="M1 1l4.4 4.4M5.4 1L1 5.4" stroke="#303030" stroke-width="1.9" stroke-linecap="round"/></svg>
<svg class="r" style="left:309.2px;top:428.37999999999994px;" width="9" height="9" viewBox="0 0 9 9"><path d="M2.2 6.9H1.6Q0.7 6.9 0.7 6V1.9Q0.7 1 1.6 1H7.3Q8.2 1 8.2 1.9V6Q8.2 6.9 7.3 6.9H6.7" fill="none" stroke="#1e1e1e" stroke-width="1.05"/><path d="M1.2 1.2H7.7" stroke="#1e1e1e" stroke-width="1.2"/><circle cx="4.45" cy="4.0" r="1.6" fill="#1e1e1e"/><path d="M3.5 5H5.4L5.6 6.4Q7.5 6.8 7.8 8.8H1.1Q1.4 6.8 3.3 6.4Z" fill="#1e1e1e"/></svg>
<div class="t" style="left:321.80px;top:428.00px;font-size:9.5px;transform:scaleX(0.86);color:#333;font-weight:400;">HTTPS</div>
<svg class="r" style="left:455.8px;top:429.67999999999995px;" width="6.4" height="6.4" viewBox="0 0 6.4 6.4"><path d="M1 1l4.4 4.4M5.4 1L1 5.4" stroke="#303030" stroke-width="1.9" stroke-linecap="round"/></svg>
<svg class="r" style="left:309.2px;top:441.45px;" width="9" height="9" viewBox="0 0 9 9"><path d="M2.2 6.9H1.6Q0.7 6.9 0.7 6V1.9Q0.7 1 1.6 1H7.3Q8.2 1 8.2 1.9V6Q8.2 6.9 7.3 6.9H6.7" fill="none" stroke="#1e1e1e" stroke-width="1.05"/><path d="M1.2 1.2H7.7" stroke="#1e1e1e" stroke-width="1.2"/><circle cx="4.45" cy="4.0" r="1.6" fill="#1e1e1e"/><path d="M3.5 5H5.4L5.6 6.4Q7.5 6.8 7.8 8.8H1.1Q1.4 6.8 3.3 6.4Z" fill="#1e1e1e"/></svg>
<div class="t" style="left:321.80px;top:441.00px;font-size:9.5px;transform:scaleX(0.86);color:#333;font-weight:400;">MYSQL</div>
<svg class="r" style="left:455.8px;top:442.75px;" width="6.4" height="6.4" viewBox="0 0 6.4 6.4"><path d="M1 1l4.4 4.4M5.4 1L1 5.4" stroke="#303030" stroke-width="1.9" stroke-linecap="round"/></svg>
<svg class="r" style="left:309.2px;top:454.52px;" width="9" height="9" viewBox="0 0 9 9"><path d="M2.2 6.9H1.6Q0.7 6.9 0.7 6V1.9Q0.7 1 1.6 1H7.3Q8.2 1 8.2 1.9V6Q8.2 6.9 7.3 6.9H6.7" fill="none" stroke="#1e1e1e" stroke-width="1.05"/><path d="M1.2 1.2H7.7" stroke="#1e1e1e" stroke-width="1.2"/><circle cx="4.45" cy="4.0" r="1.6" fill="#1e1e1e"/><path d="M3.5 5H5.4L5.6 6.4Q7.5 6.8 7.8 8.8H1.1Q1.4 6.8 3.3 6.4Z" fill="#1e1e1e"/></svg>
<div class="t" style="left:321.80px;top:454.00px;font-size:9.5px;transform:scaleX(0.86);color:#333;font-weight:400;">PING</div>
<svg class="r" style="left:455.8px;top:455.82px;" width="6.4" height="6.4" viewBox="0 0 6.4 6.4"><path d="M1 1l4.4 4.4M5.4 1L1 5.4" stroke="#303030" stroke-width="1.9" stroke-linecap="round"/></svg>
<svg class="r" style="left:309.2px;top:467.59px;" width="9" height="9" viewBox="0 0 9 9"><path d="M2.2 6.9H1.6Q0.7 6.9 0.7 6V1.9Q0.7 1 1.6 1H7.3Q8.2 1 8.2 1.9V6Q8.2 6.9 7.3 6.9H6.7" fill="none" stroke="#1e1e1e" stroke-width="1.05"/><path d="M1.2 1.2H7.7" stroke="#1e1e1e" stroke-width="1.2"/><circle cx="4.45" cy="4.0" r="1.6" fill="#1e1e1e"/><path d="M3.5 5H5.4L5.6 6.4Q7.5 6.8 7.8 8.8H1.1Q1.4 6.8 3.3 6.4Z" fill="#1e1e1e"/></svg>
<div class="t" style="left:321.80px;top:467.00px;font-size:9.5px;transform:scaleX(0.86);color:#333;font-weight:400;">RDP</div>
<svg class="r" style="left:455.8px;top:468.89px;" width="6.4" height="6.4" viewBox="0 0 6.4 6.4"><path d="M1 1l4.4 4.4M5.4 1L1 5.4" stroke="#303030" stroke-width="1.9" stroke-linecap="round"/></svg>
<svg class="r" style="left:309.2px;top:480.65999999999997px;" width="9" height="9" viewBox="0 0 9 9"><path d="M2.2 6.9H1.6Q0.7 6.9 0.7 6V1.9Q0.7 1 1.6 1H7.3Q8.2 1 8.2 1.9V6Q8.2 6.9 7.3 6.9H6.7" fill="none" stroke="#1e1e1e" stroke-width="1.05"/><path d="M1.2 1.2H7.7" stroke="#1e1e1e" stroke-width="1.2"/><circle cx="4.45" cy="4.0" r="1.6" fill="#1e1e1e"/><path d="M3.5 5H5.4L5.6 6.4Q7.5 6.8 7.8 8.8H1.1Q1.4 6.8 3.3 6.4Z" fill="#1e1e1e"/></svg>
<div class="t" style="left:321.80px;top:480.00px;font-size:9.5px;transform:scaleX(0.915);color:#333;font-weight:400;">Server Socket SRV14</div>
<svg class="r" style="left:455.8px;top:481.96px;" width="6.4" height="6.4" viewBox="0 0 6.4 6.4"><path d="M1 1l4.4 4.4M5.4 1L1 5.4" stroke="#303030" stroke-width="1.9" stroke-linecap="round"/></svg>
<svg class="r" style="left:309.2px;top:493.72999999999996px;" width="9" height="9" viewBox="0 0 9 9"><path d="M2.2 6.9H1.6Q0.7 6.9 0.7 6V1.9Q0.7 1 1.6 1H7.3Q8.2 1 8.2 1.9V6Q8.2 6.9 7.3 6.9H6.7" fill="none" stroke="#1e1e1e" stroke-width="1.05"/><path d="M1.2 1.2H7.7" stroke="#1e1e1e" stroke-width="1.2"/><circle cx="4.45" cy="4.0" r="1.6" fill="#1e1e1e"/><path d="M3.5 5H5.4L5.6 6.4Q7.5 6.8 7.8 8.8H1.1Q1.4 6.8 3.3 6.4Z" fill="#1e1e1e"/></svg>
<div class="t" style="left:321.80px;top:494.00px;font-size:9.5px;transform:scaleX(0.915);color:#333;font-weight:400;">TCP port office allow</div>
<svg class="r" style="left:455.8px;top:495.03px;" width="6.4" height="6.4" viewBox="0 0 6.4 6.4"><path d="M1 1l4.4 4.4M5.4 1L1 5.4" stroke="#303030" stroke-width="1.9" stroke-linecap="round"/></svg>
<svg class="r" style="left:381.8px;top:508.8px;" width="5" height="5" viewBox="0 0 5 5"><path d="M2.5 0v5M0 2.5h5" stroke="#1a1a1a" stroke-width="1.25"/></svg>
<div class="t" style="left:161.00px;top:313.00px;font-size:9.5px;transform:scaleX(0.915);color:#333;font-weight:400;">IP/MAC Based Access Control</div>
<svg class="r" style="left:284.4px;top:313px;" width="8.2" height="8.2" viewBox="0 0 8.2 8.2"><circle cx="4.1" cy="4.1" r="4.1" fill="#2a6ebb"/><rect x="3.4" y="3.4" width="1.5" height="3.4" fill="#fff"/><circle cx="4.15" cy="2.2" r="0.85" fill="#fff"/></svg>
<div class="t" style="left:161.00px;top:330.00px;font-size:9.5px;transform:scaleX(0.915);color:#333;font-weight:400;">Destination</div>
<div class="t" style="left:161.00px;top:359.00px;font-size:9.5px;transform:scaleX(0.915);color:#333;font-weight:400;">Schedule</div>
<div class="t" style="left:161.00px;top:376.00px;font-size:9.5px;transform:scaleX(0.915);color:#333;font-weight:400;">Service</div>
<div class="t" style="left:161.00px;top:523.00px;font-size:9.5px;transform:scaleX(0.915);color:#333;font-weight:400;">Action</div>
<div class="t" style="left:161.30px;top:553.00px;font-size:9.5px;transform:scaleX(0.915);color:#333;font-weight:400;">Inspection Mode</div>
<div class="r" style="left:194.4px;top:378.1px;width:17.6px;height:17.6px;border-radius:50%;background:#8e0b0b;color:#fff;font-size:11px;font-weight:400;-webkit-text-stroke:0.45px #fff;line-height:17.6px;text-align:center;z-index:20;">1</div>
<div class="r" style="left:401.6px;top:503.0px;width:17.6px;height:17.6px;border-radius:50%;background:#8e0b0b;color:#fff;font-size:11px;font-weight:400;-webkit-text-stroke:0.45px #fff;line-height:17.6px;text-align:center;z-index:20;">2</div>
<div class="r" style="left:303px;top:520px;width:59px;height:15px;background:#4a925a;"></div>
<svg class="r" style="left:309px;top:523.3px;" width="10" height="8.5" viewBox="0 0 10 8.5"><path d="M1 4.3l2.8 2.8L9 1.5" fill="none" stroke="#fff" stroke-width="2.3"/></svg>
<div class="t" style="left:322.50px;top:523.00px;font-size:9.5px;transform:scaleX(0.895);color:#fff;font-weight:400;">ACCEPT</div>
<div class="r" style="left:362px;top:520px;width:49px;height:15px;border:1px solid #dadada;border-left:none;box-sizing:border-box;background:#fff;"></div>
<svg class="r" style="left:367.8px;top:522.8px;" width="8.6" height="8.6" viewBox="0 0 8.6 8.6"><circle cx="4.3" cy="4.3" r="3.6" fill="none" stroke="#d0262c" stroke-width="1.3"/><path d="M1.9 6.7L6.7 1.9" stroke="#d0262c" stroke-width="1.3"/></svg>
<div class="t" style="left:381.50px;top:523.00px;font-size:9.5px;transform:scaleX(0.915);color:#333;font-weight:400;">DENY</div>
<div class="r" style="left:236px;top:551px;width:55px;height:14px;border:1px solid #dadada;box-sizing:border-box;background:#fff;"></div>
<div class="t" style="left:241.00px;top:553.00px;font-size:9.5px;transform:scaleX(0.915);color:#333;font-weight:400;">Flow-based</div>
<div class="r" style="left:291px;top:551px;width:59px;height:14px;background:#4a925a;"></div>
<div class="t" style="left:295.50px;top:553.00px;font-size:9.5px;transform:scaleX(0.93);color:#fff;font-weight:400;">Proxy-based</div>
<div class="r" style="left:147px;top:570px;width:592px;height:8px;background:linear-gradient(#fff,#e0e0e0);z-index:8;"></div>
<div class="r" style="left:553px;top:85px;width:180px;height:485px;background:#fff;border:1px solid #cfcfcf;box-sizing:border-box;box-shadow:0 0 3px rgba(0,0,0,0.25);z-index:10;"></div>
<div class="r" style="left:554px;top:86px;width:178px;height:16px;background:#e6e6e6;z-index:10;"></div>
<div class="t" style="left:558.80px;top:89.00px;font-size:9.8px;transform:scaleX(0.9);color:#333;font-weight:400;z-index:11;">Select Entries</div>
<svg class="r" style="left:720.8px;top:91.2px;z-index:11;" width="6.6" height="6.6" viewBox="0 0 6.6 6.6"><path d="M0.9 0.9l4.8 4.8M5.7 0.9L0.9 5.7" stroke="#1a1a1a" stroke-width="2"/></svg>
<div class="r" style="left:557.2px;top:104px;width:120px;height:16.2px;background:#fff;border:1px solid #777;border-right-color:#bbb;border-bottom-color:#bbb;box-sizing:border-box;border-radius:1px;z-index:11;"></div>
<svg class="r" style="left:561.5px;top:107px;z-index:12;" width="9" height="10" viewBox="0 0 9 10"><circle cx="3.7" cy="3.7" r="3" fill="none" stroke="#333" stroke-width="1.2"/><path d="M5.8 5.8l2.6 2.8" stroke="#333" stroke-width="1.4"/></svg>
<div class="t" style="left:572.00px;top:108.00px;font-size:9.8px;transform:scaleX(0.86);color:#7a7a80;font-weight:400;z-index:12;">Search</div>
<div class="r" style="left:679.5px;top:104.3px;width:50.1px;height:15.9px;background:#e9e9e9;border:1px solid #cfcfcf;box-sizing:border-box;z-index:11;"></div>
<svg class="r" style="left:685.8px;top:108.3px;z-index:12;" width="8" height="8" viewBox="0 0 8 8"><path d="M4 0v8M0 4h8" stroke="#222" stroke-width="1.7"/></svg>
<div class="t" style="left:698.20px;top:108.00px;font-size:9.8px;transform:scaleX(0.9);color:#333;font-weight:400;z-index:12;">Create</div>
<svg class="r" style="left:699px;top:113px;z-index:30;" width="12" height="14" viewBox="0 0 12 14"><path d="M3.5 1.8Q3.5 0.9 4.3 0.9Q5.1 0.9 5.1 1.8V5Q6 4.3 7.2 4.6Q8.5 4.4 9.2 5.2Q10.4 5.3 10.4 6.5V9.3Q10.4 12.6 7.5 12.6H6.1Q4.8 12.6 4 11.6L0.9 8.4Q0.5 7.6 1.3 7.3Q2.1 7.1 3.5 8.2Z" fill="#111" stroke="#fff" stroke-width="0.55"/></svg>
<svg class="r" style="left:562.2px;top:127.5px;z-index:11;" width="7" height="7" viewBox="0 0 7 7"><rect x="0" y="0" width="7" height="7" rx="1.2" fill="#777"/><rect x="1.2" y="2.8" width="4.6" height="1.4" fill="#fff"/></svg>
<div class="t" style="left:573.60px;top:127.00px;font-size:9.8px;transform:scaleX(0.83);color:#5a5a5a;font-weight:400;z-index:11;">SERVICE (106)</div>
<div class="r" style="left:679.3px;top:122.8px;width:17.6px;height:17.6px;border-radius:50%;background:#8e0b0b;color:#fff;font-size:11px;font-weight:400;-webkit-text-stroke:0.45px #fff;line-height:17.6px;text-align:center;z-index:20;">3</div>
<div class="r" style="left:554.4px;top:138px;width:177px;height:406.3px;overflow:hidden;z-index:11;">
<div class="t" style="left:7.10px;top:5.00px;font-size:8px;transform:scaleX(0.9);color:#777;font-weight:400;">General (5)</div>
<div class="r" style="left:2.6000000000000227px;top:14.400000000000006px;width:163.4px;height:13.8px;background:#e3e3e3;"></div>
<div class="t" style="left:3.80px;top:18.00px;font-size:8px;transform:scaleX(0.9);color:#c0392b;font-weight:400;">*</div>
<svg class="r" style="left:151.60000000000002px;top:16.400000000000006px;" width="9" height="9" viewBox="0 0 9 9"><path d="M0.4 8.6l0.7-2.9 5.4-5.4 2.2 2.2-5.4 5.4z" fill="#5a5a5a"/><path d="M5.6 1.3l2.2 2.2M1.3 5.8l2 2" stroke="#e3e3e3" stroke-width="0.6"/></svg>
<svg class="r" style="left:7.800000000000068px;top:17.099999999999994px;" width="9" height="9" viewBox="0 0 9 9"><path d="M2.2 6.9H1.6Q0.7 6.9 0.7 6V1.9Q0.7 1 1.6 1H7.3Q8.2 1 8.2 1.9V6Q8.2 6.9 7.3 6.9H6.7" fill="none" stroke="#1e1e1e" stroke-width="1.05"/><path d="M1.2 1.2H7.7" stroke="#1e1e1e" stroke-width="1.2"/><circle cx="4.45" cy="4.0" r="1.6" fill="#1e1e1e"/><path d="M3.5 5H5.4L5.6 6.4Q7.5 6.8 7.8 8.8H1.1Q1.4 6.8 3.3 6.4Z" fill="#1e1e1e"/></svg>
<div class="t" style="left:20.30px;top:17.00px;font-size:9.8px;transform:scaleX(0.85);color:#383838;font-weight:400;-webkit-text-stroke:0.08px #383838;">ALL</div>
<svg class="r" style="left:7.800000000000068px;top:31.25px;" width="9" height="9" viewBox="0 0 9 9"><path d="M2.2 6.9H1.6Q0.7 6.9 0.7 6V1.9Q0.7 1 1.6 1H7.3Q8.2 1 8.2 1.9V6Q8.2 6.9 7.3 6.9H6.7" fill="none" stroke="#1e1e1e" stroke-width="1.05"/><path d="M1.2 1.2H7.7" stroke="#1e1e1e" stroke-width="1.2"/><circle cx="4.45" cy="4.0" r="1.6" fill="#1e1e1e"/><path d="M3.5 5H5.4L5.6 6.4Q7.5 6.8 7.8 8.8H1.1Q1.4 6.8 3.3 6.4Z" fill="#1e1e1e"/></svg>
<div class="t" style="left:20.30px;top:31.00px;font-size:9.8px;transform:scaleX(0.85);color:#383838;font-weight:400;-webkit-text-stroke:0.08px #383838;">ALL_ICMP</div>
<svg class="r" style="left:7.800000000000068px;top:45.400000000000006px;" width="9" height="9" viewBox="0 0 9 9"><path d="M2.2 6.9H1.6Q0.7 6.9 0.7 6V1.9Q0.7 1 1.6 1H7.3Q8.2 1 8.2 1.9V6Q8.2 6.9 7.3 6.9H6.7" fill="none" stroke="#1e1e1e" stroke-width="1.05"/><path d="M1.2 1.2H7.7" stroke="#1e1e1e" stroke-width="1.2"/><circle cx="4.45" cy="4.0" r="1.6" fill="#1e1e1e"/><path d="M3.5 5H5.4L5.6 6.4Q7.5 6.8 7.8 8.8H1.1Q1.4 6.8 3.3 6.4Z" fill="#1e1e1e"/></svg>
<div class="t" style="left:20.30px;top:45.00px;font-size:9.8px;transform:scaleX(0.85);color:#383838;font-weight:400;-webkit-text-stroke:0.08px #383838;">ALL_ICMP6</div>
<svg class="r" style="left:7.800000000000068px;top:59.54999999999998px;" width="9" height="9" viewBox="0 0 9 9"><path d="M2.2 6.9H1.6Q0.7 6.9 0.7 6V1.9Q0.7 1 1.6 1H7.3Q8.2 1 8.2 1.9V6Q8.2 6.9 7.3 6.9H6.7" fill="none" stroke="#1e1e1e" stroke-width="1.05"/><path d="M1.2 1.2H7.7" stroke="#1e1e1e" stroke-width="1.2"/><circle cx="4.45" cy="4.0" r="1.6" fill="#1e1e1e"/><path d="M3.5 5H5.4L5.6 6.4Q7.5 6.8 7.8 8.8H1.1Q1.4 6.8 3.3 6.4Z" fill="#1e1e1e"/></svg>
<div class="t" style="left:20.30px;top:59.00px;font-size:9.8px;transform:scaleX(0.85);color:#383838;font-weight:400;-webkit-text-stroke:0.08px #383838;">ALL_TCP</div>
<svg class="r" style="left:7.800000000000068px;top:73.69999999999999px;" width="9" height="9" viewBox="0 0 9 9"><path d="M2.2 6.9H1.6Q0.7 6.9 0.7 6V1.9Q0.7 1 1.6 1H7.3Q8.2 1 8.2 1.9V6Q8.2 6.9 7.3 6.9H6.7" fill="none" stroke="#1e1e1e" stroke-width="1.05"/><path d="M1.2 1.2H7.7" stroke="#1e1e1e" stroke-width="1.2"/><circle cx="4.45" cy="4.0" r="1.6" fill="#1e1e1e"/><path d="M3.5 5H5.4L5.6 6.4Q7.5 6.8 7.8 8.8H1.1Q1.4 6.8 3.3 6.4Z" fill="#1e1e1e"/></svg>
<div class="t" style="left:20.30px;top:74.00px;font-size:9.8px;transform:scaleX(0.85);color:#383838;font-weight:400;-webkit-text-stroke:0.08px #383838;">ALL_UDP</div>
<div class="t" style="left:7.10px;top:90.00px;font-size:8px;transform:scaleX(0.9);color:#777;font-weight:400;">Web Access (2)</div>
<div class="r" style="left:2.6000000000000227px;top:99.49999999999997px;width:163.4px;height:14.1px;background:#fcf7a6;"></div>
<svg class="r" style="left:7.800000000000068px;top:101.99999999999997px;" width="9" height="9" viewBox="0 0 9 9"><path d="M2.2 6.9H1.6Q0.7 6.9 0.7 6V1.9Q0.7 1 1.6 1H7.3Q8.2 1 8.2 1.9V6Q8.2 6.9 7.3 6.9H6.7" fill="none" stroke="#1e1e1e" stroke-width="1.05"/><path d="M1.2 1.2H7.7" stroke="#1e1e1e" stroke-width="1.2"/><circle cx="4.45" cy="4.0" r="1.6" fill="#1e1e1e"/><path d="M3.5 5H5.4L5.6 6.4Q7.5 6.8 7.8 8.8H1.1Q1.4 6.8 3.3 6.4Z" fill="#1e1e1e"/></svg>
<div class="t" style="left:20.30px;top:102.00px;font-size:9.8px;transform:scaleX(0.85);color:#383838;font-weight:400;-webkit-text-stroke:0.08px #383838;">HTTP</div>
<div class="r" style="left:2.6000000000000227px;top:113.65px;width:163.4px;height:14.1px;background:#fcf7a6;"></div>
<svg class="r" style="left:7.800000000000068px;top:116.15px;" width="9" height="9" viewBox="0 0 9 9"><path d="M2.2 6.9H1.6Q0.7 6.9 0.7 6V1.9Q0.7 1 1.6 1H7.3Q8.2 1 8.2 1.9V6Q8.2 6.9 7.3 6.9H6.7" fill="none" stroke="#1e1e1e" stroke-width="1.05"/><path d="M1.2 1.2H7.7" stroke="#1e1e1e" stroke-width="1.2"/><circle cx="4.45" cy="4.0" r="1.6" fill="#1e1e1e"/><path d="M3.5 5H5.4L5.6 6.4Q7.5 6.8 7.8 8.8H1.1Q1.4 6.8 3.3 6.4Z" fill="#1e1e1e"/></svg>
<div class="t" style="left:20.30px;top:116.00px;font-size:9.8px;transform:scaleX(0.85);color:#383838;font-weight:400;-webkit-text-stroke:0.08px #383838;">HTTPS</div>
<div class="t" style="left:7.10px;top:132.00px;font-size:8px;transform:scaleX(0.9);color:#777;font-weight:400;">File Access (8)</div>
<svg class="r" style="left:7.800000000000068px;top:144.45000000000005px;" width="9" height="9" viewBox="0 0 9 9"><path d="M2.2 6.9H1.6Q0.7 6.9 0.7 6V1.9Q0.7 1 1.6 1H7.3Q8.2 1 8.2 1.9V6Q8.2 6.9 7.3 6.9H6.7" fill="none" stroke="#1e1e1e" stroke-width="1.05"/><path d="M1.2 1.2H7.7" stroke="#1e1e1e" stroke-width="1.2"/><circle cx="4.45" cy="4.0" r="1.6" fill="#1e1e1e"/><path d="M3.5 5H5.4L5.6 6.4Q7.5 6.8 7.8 8.8H1.1Q1.4 6.8 3.3 6.4Z" fill="#1e1e1e"/></svg>
<div class="t" style="left:20.30px;top:144.00px;font-size:9.8px;transform:scaleX(0.85);color:#383838;font-weight:400;-webkit-text-stroke:0.08px #383838;">AFS3</div>
<div class="r" style="left:2.6000000000000227px;top:156.10000000000002px;width:163.4px;height:14.1px;background:#fcf7a6;"></div>
<svg class="r" style="left:7.800000000000068px;top:158.60000000000002px;" width="9" height="9" viewBox="0 0 9 9"><path d="M2.2 6.9H1.6Q0.7 6.9 0.7 6V1.9Q0.7 1 1.6 1H7.3Q8.2 1 8.2 1.9V6Q8.2 6.9 7.3 6.9H6.7" fill="none" stroke="#1e1e1e" stroke-width="1.05"/><path d="M1.2 1.2H7.7" stroke="#1e1e1e" stroke-width="1.2"/><circle cx="4.45" cy="4.0" r="1.6" fill="#1e1e1e"/><path d="M3.5 5H5.4L5.6 6.4Q7.5 6.8 7.8 8.8H1.1Q1.4 6.8 3.3 6.4Z" fill="#1e1e1e"/></svg>
<div class="t" style="left:20.30px;top:158.00px;font-size:9.8px;transform:scaleX(0.85);color:#383838;font-weight:400;-webkit-text-stroke:0.08px #383838;">FTP</div>
<svg class="r" style="left:7.800000000000068px;top:172.75px;" width="9" height="9" viewBox="0 0 9 9"><path d="M2.2 6.9H1.6Q0.7 6.9 0.7 6V1.9Q0.7 1 1.6 1H7.3Q8.2 1 8.2 1.9V6Q8.2 6.9 7.3 6.9H6.7" fill="none" stroke="#1e1e1e" stroke-width="1.05"/><path d="M1.2 1.2H7.7" stroke="#1e1e1e" stroke-width="1.2"/><circle cx="4.45" cy="4.0" r="1.6" fill="#1e1e1e"/><path d="M3.5 5H5.4L5.6 6.4Q7.5 6.8 7.8 8.8H1.1Q1.4 6.8 3.3 6.4Z" fill="#1e1e1e"/></svg>
<div class="t" style="left:20.30px;top:173.00px;font-size:9.8px;transform:scaleX(0.85);color:#383838;font-weight:400;-webkit-text-stroke:0.08px #383838;">FTP_GET</div>
<svg class="r" style="left:7.800000000000068px;top:186.90000000000003px;" width="9" height="9" viewBox="0 0 9 9"><path d="M2.2 6.9H1.6Q0.7 6.9 0.7 6V1.9Q0.7 1 1.6 1H7.3Q8.2 1 8.2 1.9V6Q8.2 6.9 7.3 6.9H6.7" fill="none" stroke="#1e1e1e" stroke-width="1.05"/><path d="M1.2 1.2H7.7" stroke="#1e1e1e" stroke-width="1.2"/><circle cx="4.45" cy="4.0" r="1.6" fill="#1e1e1e"/><path d="M3.5 5H5.4L5.6 6.4Q7.5 6.8 7.8 8.8H1.1Q1.4 6.8 3.3 6.4Z" fill="#1e1e1e"/></svg>
<div class="t" style="left:20.30px;top:187.00px;font-size:9.8px;transform:scaleX(0.85);color:#383838;font-weight:400;-webkit-text-stroke:0.08px #383838;">FTP_PUT</div>
<svg class="r" style="left:7.800000000000068px;top:201.05px;" width="9" height="9" viewBox="0 0 9 9"><path d="M2.2 6.9H1.6Q0.7 6.9 0.7 6V1.9Q0.7 1 1.6 1H7.3Q8.2 1 8.2 1.9V6Q8.2 6.9 7.3 6.9H6.7" fill="none" stroke="#1e1e1e" stroke-width="1.05"/><path d="M1.2 1.2H7.7" stroke="#1e1e1e" stroke-width="1.2"/><circle cx="4.45" cy="4.0" r="1.6" fill="#1e1e1e"/><path d="M3.5 5H5.4L5.6 6.4Q7.5 6.8 7.8 8.8H1.1Q1.4 6.8 3.3 6.4Z" fill="#1e1e1e"/></svg>
<div class="t" style="left:20.30px;top:201.00px;font-size:9.8px;transform:scaleX(0.85);color:#383838;font-weight:400;-webkit-text-stroke:0.08px #383838;">NFS</div>
<svg class="r" style="left:7.800000000000068px;top:215.20000000000005px;" width="9" height="9" viewBox="0 0 9 9"><path d="M2.2 6.9H1.6Q0.7 6.9 0.7 6V1.9Q0.7 1 1.6 1H7.3Q8.2 1 8.2 1.9V6Q8.2 6.9 7.3 6.9H6.7" fill="none" stroke="#1e1e1e" stroke-width="1.05"/><path d="M1.2 1.2H7.7" stroke="#1e1e1e" stroke-width="1.2"/><circle cx="4.45" cy="4.0" r="1.6" fill="#1e1e1e"/><path d="M3.5 5H5.4L5.6 6.4Q7.5 6.8 7.8 8.8H1.1Q1.4 6.8 3.3 6.4Z" fill="#1e1e1e"/></svg>
<div class="t" style="left:20.30px;top:215.00px;font-size:9.8px;transform:scaleX(0.85);color:#383838;font-weight:400;-webkit-text-stroke:0.08px #383838;">SAMBA</div>
<svg class="r" style="left:7.800000000000068px;top:229.35000000000002px;" width="9" height="9" viewBox="0 0 9 9"><path d="M2.2 6.9H1.6Q0.7 6.9 0.7 6V1.9Q0.7 1 1.6 1H7.3Q8.2 1 8.2 1.9V6Q8.2 6.9 7.3 6.9H6.7" fill="none" stroke="#1e1e1e" stroke-width="1.05"/><path d="M1.2 1.2H7.7" stroke="#1e1e1e" stroke-width="1.2"/><circle cx="4.45" cy="4.0" r="1.6" fill="#1e1e1e"/><path d="M3.5 5H5.4L5.6 6.4Q7.5 6.8 7.8 8.8H1.1Q1.4 6.8 3.3 6.4Z" fill="#1e1e1e"/></svg>
<div class="t" style="left:20.30px;top:229.00px;font-size:9.8px;transform:scaleX(0.85);color:#383838;font-weight:400;-webkit-text-stroke:0.08px #383838;">SMB</div>
<svg class="r" style="left:7.800000000000068px;top:243.5px;" width="9" height="9" viewBox="0 0 9 9"><path d="M2.2 6.9H1.6Q0.7 6.9 0.7 6V1.9Q0.7 1 1.6 1H7.3Q8.2 1 8.2 1.9V6Q8.2 6.9 7.3 6.9H6.7" fill="none" stroke="#1e1e1e" stroke-width="1.05"/><path d="M1.2 1.2H7.7" stroke="#1e1e1e" stroke-width="1.2"/><circle cx="4.45" cy="4.0" r="1.6" fill="#1e1e1e"/><path d="M3.5 5H5.4L5.6 6.4Q7.5 6.8 7.8 8.8H1.1Q1.4 6.8 3.3 6.4Z" fill="#1e1e1e"/></svg>
<div class="t" style="left:20.30px;top:243.00px;font-size:9.8px;transform:scaleX(0.85);color:#383838;font-weight:400;-webkit-text-stroke:0.08px #383838;">TFTP</div>
<div class="t" style="left:7.10px;top:260.00px;font-size:8px;transform:scaleX(0.9);color:#777;font-weight:400;">Email (6)</div>
<svg class="r" style="left:7.800000000000068px;top:271.80000000000007px;" width="9" height="9" viewBox="0 0 9 9"><path d="M2.2 6.9H1.6Q0.7 6.9 0.7 6V1.9Q0.7 1 1.6 1H7.3Q8.2 1 8.2 1.9V6Q8.2 6.9 7.3 6.9H6.7" fill="none" stroke="#1e1e1e" stroke-width="1.05"/><path d="M1.2 1.2H7.7" stroke="#1e1e1e" stroke-width="1.2"/><circle cx="4.45" cy="4.0" r="1.6" fill="#1e1e1e"/><path d="M3.5 5H5.4L5.6 6.4Q7.5 6.8 7.8 8.8H1.1Q1.4 6.8 3.3 6.4Z" fill="#1e1e1e"/></svg>
<div class="t" style="left:20.30px;top:272.00px;font-size:9.8px;transform:scaleX(0.85);color:#383838;font-weight:400;-webkit-text-stroke:0.08px #383838;">IMAP</div>
<svg class="r" style="left:7.800000000000068px;top:285.95000000000005px;" width="9" height="9" viewBox="0 0 9 9"><path d="M2.2 6.9H1.6Q0.7 6.9 0.7 6V1.9Q0.7 1 1.6 1H7.3Q8.2 1 8.2 1.9V6Q8.2 6.9 7.3 6.9H6.7" fill="none" stroke="#1e1e1e" stroke-width="1.05"/><path d="M1.2 1.2H7.7" stroke="#1e1e1e" stroke-width="1.2"/><circle cx="4.45" cy="4.0" r="1.6" fill="#1e1e1e"/><path d="M3.5 5H5.4L5.6 6.4Q7.5 6.8 7.8 8.8H1.1Q1.4 6.8 3.3 6.4Z" fill="#1e1e1e"/></svg>
<div class="t" style="left:20.30px;top:286.00px;font-size:9.8px;transform:scaleX(0.85);color:#383838;font-weight:400;-webkit-text-stroke:0.08px #383838;">IMAPS</div>
<svg class="r" style="left:7.800000000000068px;top:300.1px;" width="9" height="9" viewBox="0 0 9 9"><path d="M2.2 6.9H1.6Q0.7 6.9 0.7 6V1.9Q0.7 1 1.6 1H7.3Q8.2 1 8.2 1.9V6Q8.2 6.9 7.3 6.9H6.7" fill="none" stroke="#1e1e1e" stroke-width="1.05"/><path d="M1.2 1.2H7.7" stroke="#1e1e1e" stroke-width="1.2"/><circle cx="4.45" cy="4.0" r="1.6" fill="#1e1e1e"/><path d="M3.5 5H5.4L5.6 6.4Q7.5 6.8 7.8 8.8H1.1Q1.4 6.8 3.3 6.4Z" fill="#1e1e1e"/></svg>
<div class="t" style="left:20.30px;top:300.00px;font-size:9.8px;transform:scaleX(0.85);color:#383838;font-weight:400;-webkit-text-stroke:0.08px #383838;">POP3</div>
<svg class="r" style="left:7.800000000000068px;top:314.25px;" width="9" height="9" viewBox="0 0 9 9"><path d="M2.2 6.9H1.6Q0.7 6.9 0.7 6V1.9Q0.7 1 1.6 1H7.3Q8.2 1 8.2 1.9V6Q8.2 6.9 7.3 6.9H6.7" fill="none" stroke="#1e1e1e" stroke-width="1.05"/><path d="M1.2 1.2H7.7" stroke="#1e1e1e" stroke-width="1.2"/><circle cx="4.45" cy="4.0" r="1.6" fill="#1e1e1e"/><path d="M3.5 5H5.4L5.6 6.4Q7.5 6.8 7.8 8.8H1.1Q1.4 6.8 3.3 6.4Z" fill="#1e1e1e"/></svg>
<div class="t" style="left:20.30px;top:314.00px;font-size:9.8px;transform:scaleX(0.85);color:#383838;font-weight:400;-webkit-text-stroke:0.08px #383838;">POP3S</div>
<svg class="r" style="left:7.800000000000068px;top:328.4px;" width="9" height="9" viewBox="0 0 9 9"><path d="M2.2 6.9H1.6Q0.7 6.9 0.7 6V1.9Q0.7 1 1.6 1H7.3Q8.2 1 8.2 1.9V6Q8.2 6.9 7.3 6.9H6.7" fill="none" stroke="#1e1e1e" stroke-width="1.05"/><path d="M1.2 1.2H7.7" stroke="#1e1e1e" stroke-width="1.2"/><circle cx="4.45" cy="4.0" r="1.6" fill="#1e1e1e"/><path d="M3.5 5H5.4L5.6 6.4Q7.5 6.8 7.8 8.8H1.1Q1.4 6.8 3.3 6.4Z" fill="#1e1e1e"/></svg>
<div class="t" style="left:20.30px;top:328.00px;font-size:9.8px;transform:scaleX(0.85);color:#383838;font-weight:400;-webkit-text-stroke:0.08px #383838;">SMTP</div>
<svg class="r" style="left:7.800000000000068px;top:342.55000000000007px;" width="9" height="9" viewBox="0 0 9 9"><path d="M2.2 6.9H1.6Q0.7 6.9 0.7 6V1.9Q0.7 1 1.6 1H7.3Q8.2 1 8.2 1.9V6Q8.2 6.9 7.3 6.9H6.7" fill="none" stroke="#1e1e1e" stroke-width="1.05"/><path d="M1.2 1.2H7.7" stroke="#1e1e1e" stroke-width="1.2"/><circle cx="4.45" cy="4.0" r="1.6" fill="#1e1e1e"/><path d="M3.5 5H5.4L5.6 6.4Q7.5 6.8 7.8 8.8H1.1Q1.4 6.8 3.3 6.4Z" fill="#1e1e1e"/></svg>
<div class="t" style="left:20.30px;top:342.00px;font-size:9.8px;transform:scaleX(0.85);color:#383838;font-weight:400;-webkit-text-stroke:0.08px #383838;">SMTPS</div>
<div class="t" style="left:7.10px;top:359.00px;font-size:8px;transform:scaleX(0.9);color:#777;font-weight:400;">Network Services (11)</div>
<svg class="r" style="left:7.800000000000068px;top:370.85px;" width="9" height="9" viewBox="0 0 9 9"><path d="M2.2 6.9H1.6Q0.7 6.9 0.7 6V1.9Q0.7 1 1.6 1H7.3Q8.2 1 8.2 1.9V6Q8.2 6.9 7.3 6.9H6.7" fill="none" stroke="#1e1e1e" stroke-width="1.05"/><path d="M1.2 1.2H7.7" stroke="#1e1e1e" stroke-width="1.2"/><circle cx="4.45" cy="4.0" r="1.6" fill="#1e1e1e"/><path d="M3.5 5H5.4L5.6 6.4Q7.5 6.8 7.8 8.8H1.1Q1.4 6.8 3.3 6.4Z" fill="#1e1e1e"/></svg>
<div class="t" style="left:20.30px;top:371.00px;font-size:9.8px;transform:scaleX(0.85);color:#383838;font-weight:400;-webkit-text-stroke:0.08px #383838;">BGP</div>
<svg class="r" style="left:7.800000000000068px;top:385.0px;" width="9" height="9" viewBox="0 0 9 9"><path d="M2.2 6.9H1.6Q0.7 6.9 0.7 6V1.9Q0.7 1 1.6 1H7.3Q8.2 1 8.2 1.9V6Q8.2 6.9 7.3 6.9H6.7" fill="none" stroke="#1e1e1e" stroke-width="1.05"/><path d="M1.2 1.2H7.7" stroke="#1e1e1e" stroke-width="1.2"/><circle cx="4.45" cy="4.0" r="1.6" fill="#1e1e1e"/><path d="M3.5 5H5.4L5.6 6.4Q7.5 6.8 7.8 8.8H1.1Q1.4 6.8 3.3 6.4Z" fill="#1e1e1e"/></svg>
<div class="t" style="left:20.30px;top:385.00px;font-size:9.8px;transform:scaleX(0.85);color:#383838;font-weight:400;-webkit-text-stroke:0.08px #383838;">DHCP</div>
<svg class="r" style="left:7.800000000000068px;top:399.15px;" width="9" height="9" viewBox="0 0 9 9"><path d="M2.2 6.9H1.6Q0.7 6.9 0.7 6V1.9Q0.7 1 1.6 1H7.3Q8.2 1 8.2 1.9V6Q8.2 6.9 7.3 6.9H6.7" fill="none" stroke="#1e1e1e" stroke-width="1.05"/><path d="M1.2 1.2H7.7" stroke="#1e1e1e" stroke-width="1.2"/><circle cx="4.45" cy="4.0" r="1.6" fill="#1e1e1e"/><path d="M3.5 5H5.4L5.6 6.4Q7.5 6.8 7.8 8.8H1.1Q1.4 6.8 3.3 6.4Z" fill="#1e1e1e"/></svg>
<div class="t" style="left:20.30px;top:399.00px;font-size:9.8px;transform:scaleX(0.85);color:#383838;font-weight:400;-webkit-text-stroke:0.08px #383838;">DHCP6</div>
</div>
<div class="r" style="left:724.2px;top:133.2px;width:6.8px;height:96.5px;background:#a6a6a6;z-index:12;"></div>
<svg class="r" style="left:725px;top:126px;z-index:12;" width="5" height="3" viewBox="0 0 5 3"><path d="M0 3L2.5 0 5 3z" fill="#888"/></svg>
<svg class="r" style="left:725px;top:537.5px;z-index:12;" width="5" height="3" viewBox="0 0 5 3"><path d="M0 0h5L2.5 3z" fill="#888"/></svg>
<div class="r" style="left:554.4px;top:544.3px;width:177.2px;height:24.1px;background:#f7f7f7;z-index:11;"></div>
<div class="r" style="left:607.6px;top:549.4px;width:71.2px;height:14.9px;background:#fff;border:1px solid #d4d4d4;box-sizing:border-box;z-index:12;"></div>
<div class="t" style="left:632.50px;top:552.00px;font-size:9.8px;transform:scaleX(0.9);color:#333;font-weight:400;z-index:13;">Close</div>
<div class="r" style="left:733px;top:76px;width:6px;height:502px;background:#fff;border-left:1px solid #d0d0d0;box-sizing:border-box;z-index:9;"></div>
</body></html>
